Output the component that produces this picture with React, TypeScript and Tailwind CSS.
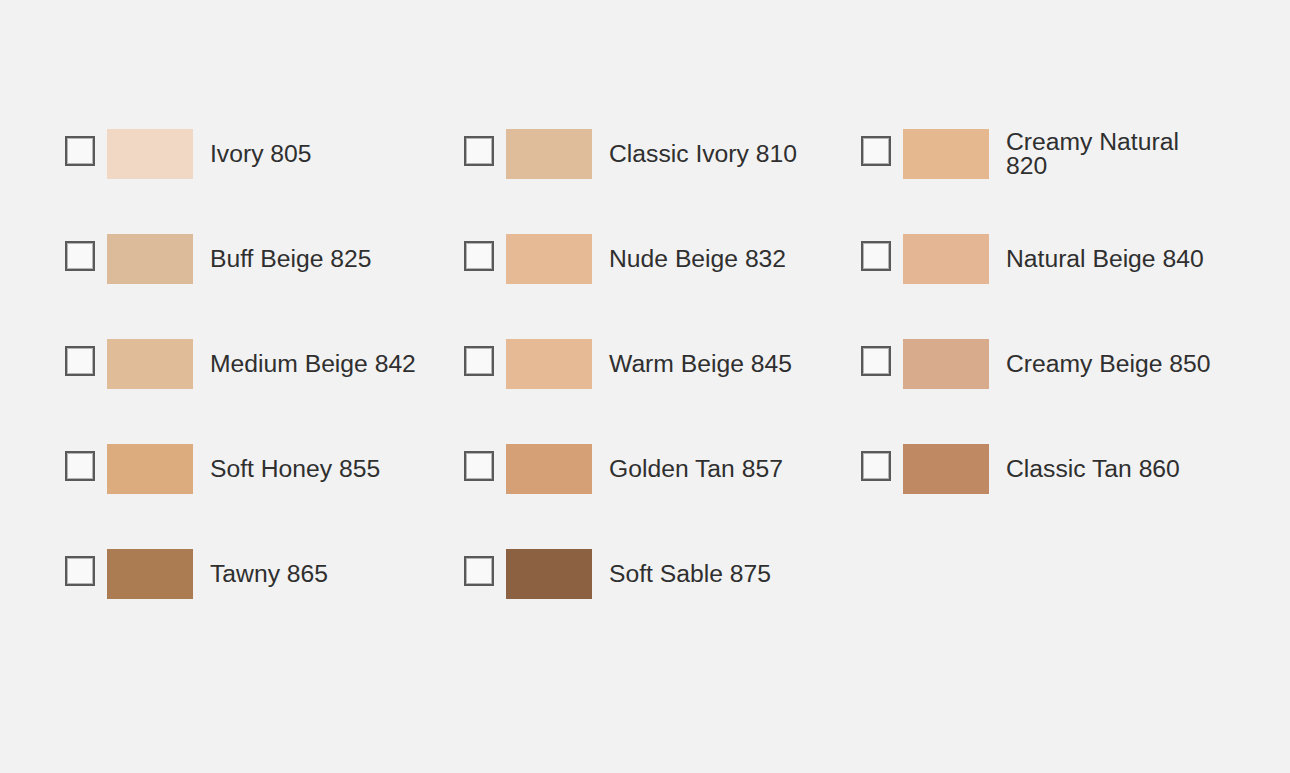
import React from 'react';

interface Shade {
  name: string;
  color: string;
}

// shades laid out row by row, three per row
const SHADES: (Shade | null)[] = [
  { name: 'Ivory 805', color: '#f0d8c5' },
  { name: 'Classic Ivory 810', color: '#dfbc9a' },
  { name: 'Creamy Natural 820', color: '#e5b890' },
  { name: 'Buff Beige 825', color: '#dcbb9a' },
  { name: 'Nude Beige 832', color: '#e6ba95' },
  { name: 'Natural Beige 840', color: '#e5b694' },
  { name: 'Medium Beige 842', color: '#e0bd98' },
  { name: 'Warm Beige 845', color: '#e6ba94' },
  { name: 'Creamy Beige 850', color: '#d8ab8d' },
  { name: 'Soft Honey 855', color: '#dcab7e' },
  { name: 'Golden Tan 857', color: '#d6a077' },
  { name: 'Classic Tan 860', color: '#bf8a63' },
  { name: 'Tawny 865', color: '#ab7c52' },
  { name: 'Soft Sable 875', color: '#8c6142' },
];

const ShadeOption: React.FC<{ shade: Shade }> = ({ shade }) => {
  const [checked, setChecked] = React.useState(false);

  return (
    <label className="flex items-center h-[50px] cursor-pointer">
      <span
        onClick={() => setChecked(!checked)}
        className="w-[30px] h-[30px] -mt-[6px] shrink-0 border-2 border-[#595959] bg-[#f9f9f9] shadow-[inset_0_0_0_1px_#b5b5b5] flex items-center justify-center"
      >
        {checked && (
          <svg className="w-5 h-5" viewBox="0 0 24 24" fill="none" stroke="#333" strokeWidth="3">
            <path d="M5 12l5 5L19 7" />
          </svg>
        )}
      </span>
      <span className="ml-3 w-[86px] h-[50px] shrink-0" style={{ background: shade.color }} />
      <span className="ml-[17px] w-[212px] text-[24.7px] leading-[24px] text-[#2f2f2f]">{shade.name}</span>
    </label>
  );
};

export default function App() {
  return (
    <div
      className="w-full min-h-screen bg-[#f2f2f2] pl-[65px] pt-[129px]"
      style={{ fontFamily: '"Liberation Sans", Arial, sans-serif' }}
    >
      <div className="grid grid-cols-[399px_397px_auto] gap-y-[55px]">
        {SHADES.map((s, i) => (s ? <ShadeOption key={s.name} shade={s} /> : <div key={i} />))}
      </div>
    </div>
  );
}
